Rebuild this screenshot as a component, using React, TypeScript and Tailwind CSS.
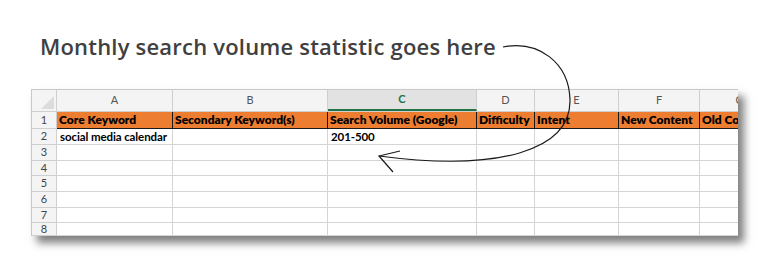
import React from "react";

const cols = [
  { key: "A", w: 116 },
  { key: "B", w: 155 },
  { key: "C", w: 149 },
  { key: "D", w: 58 },
  { key: "E", w: 84 },
  { key: "F", w: 81 },
  { key: "G", w: 80 },
];

const header = ["Core Keyword", "Secondary Keyword(s)", "Search Volume (Google)", "Difficulty", "Intent", "New Content", "Old Content"];
const rowHeights = [17, 16, 16, 15, 16, 16, 15, 13];

const App = () => {
  return (
    <div className="relative w-[770px] h-[280px] bg-white overflow-hidden" style={{ fontFamily: "Lato, 'Liberation Sans', sans-serif" }}>
      <h1
        className="pl-[40px] pt-[33px] text-[22px] leading-[26px] font-semibold text-[#404040] tracking-[0.2px]"
        style={{ fontFamily: "'Open Sans', 'Liberation Sans', sans-serif" }}
      >
        Monthly search volume statistic goes here
      </h1>

      <div className="ml-[31px] mt-[30px] w-[707px] overflow-hidden bg-white border-t border-l border-[#c8c8c8] shadow-[6px_7px_8px_rgba(0,0,0,0.5)]">
        {/* column letters */}
        <div className="flex h-[22px] bg-[#f4f4f4] border-b border-[#cfcfcf]">
          <div className="w-[25px] shrink-0 border-r border-[#cfcfcf] relative">
            <div className="absolute right-[2px] bottom-[2px] w-0 h-0 border-l-[13px] border-l-transparent border-b-[13px] border-b-[#dcdcdc]" />
          </div>
          {cols.map((c) => (
            <div
              key={c.key}
              style={{ width: c.w }}
              className={
                c.key === "C"
                  ? "shrink-0 flex items-center justify-center border-r border-[#cfcfcf] bg-[#e2e2e2] border-b-2 border-b-[#217346] text-[11px] font-bold text-[#217346]"
                  : "shrink-0 flex items-center justify-center border-r border-[#cfcfcf] text-[11px] text-[#555]"
              }
            >
              {c.key}
            </div>
          ))}
        </div>

        {rowHeights.map((h, r) => (
          <div key={r} className="flex" style={{ height: h }}>
            <div className="w-[25px] shrink-0 bg-[#f4f4f4] border-r border-b border-[#cfcfcf] flex items-center justify-center text-[11px] text-[#444]">
              {r + 1}
            </div>
            {cols.map((c, i) => {
              if (r === 0) {
                return (
                  <div
                    key={c.key}
                    style={{ width: c.w }}
                    className="shrink-0 bg-[#ed7d31] border-r border-b border-[#1a1a1a] px-[2px] flex items-center text-[12px] font-extrabold text-black whitespace-nowrap overflow-hidden"
                  >
                    {header[i]}
                  </div>
                );
              }
              let text = "";
              if (r === 1 && c.key === "A") text = "social media calendar";
              if (r === 1 && c.key === "C") text = "201-500";
              return (
                <div
                  key={c.key}
                  style={{ width: c.w }}
                  className="shrink-0 border-r border-b border-[#d4d4d4] px-[3px] flex items-center text-[11.5px] font-bold text-black whitespace-nowrap tracking-[-0.1px]"
                >
                  {text}
                </div>
              );
            })}
          </div>
        ))}
      </div>

      <svg className="absolute left-0 top-0 pointer-events-none" width="770" height="280" viewBox="0 0 770 280" fill="none">
        <path d="M503 47 C 538 40 569 62 570 100 C 571 150 500 172 379 156" stroke="#1a1a1a" strokeWidth="1.2" />
        <path d="M400 151 L379 156 L393 172" stroke="#1a1a1a" strokeWidth="1.2" />
      </svg>
    </div>
  );
};

export default App;
